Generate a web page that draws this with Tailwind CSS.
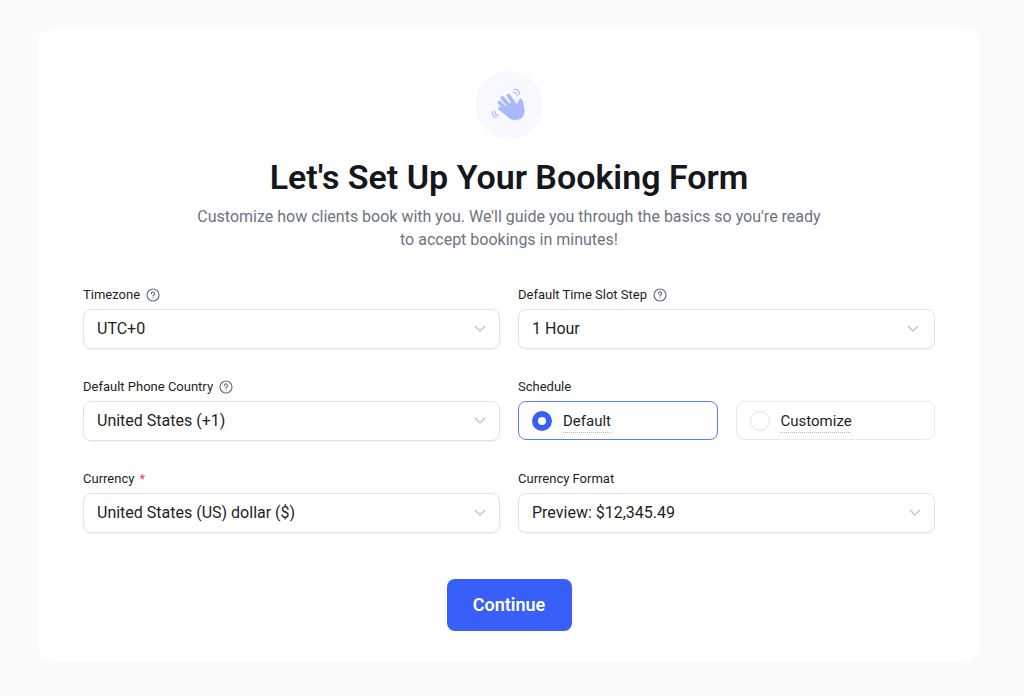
<!DOCTYPE html>
<html lang="en">
<head>
    <meta charset="UTF-8">
    <meta name="viewport" content="width=device-width, initial-scale=1.0">
    <title>Booking Form Setup</title>
    <script src="https://cdn.jsdelivr.net/npm/@tailwindcss/browser@4"></script>
</head>
<body class="bg-[#fafafa] font-[Roboto,sans-serif] text-[#1b1f23]">
    <main class="pt-[27px] pb-8 pl-[38px] pr-[44px]">
        <form class="bg-white rounded-[18px] px-[45px] pt-11 pb-[31px] flex flex-col items-center">
            <div class="size-[68px] rounded-full bg-[#f7f9ff] flex items-center justify-center">
                <!-- Waving hand -->
                <svg class="size-9" viewBox="0 0 36 36" fill="none" stroke="#a9bafb" stroke-linecap="round" stroke-linejoin="round">
                    <path d="M15 21L21 16L28 19C31 22 32 26 29.500 29.500C26.500 33 22 33 18 30Z" fill="#a9bafb" stroke-width="2"/>
                    <path d="M9 21.500L19 29" stroke-width="3.800"/>
                    <path d="M8.500 15.500L18 25" stroke-width="3.800"/>
                    <path d="M11.500 11L21 22" stroke-width="3.800"/>
                    <path d="M17.500 8.500L26 21" stroke-width="3.800"/>
                    <path d="M27 20C26.500 17 28 14.500 29.500 12.500C31.500 13.500 31.500 17 32 20C33.500 25 32 30 28 31.500" fill="#a9bafb" stroke-width="2"/>
                    <path d="M22 5.500C24.500 5 26 7 26 9M23 2.500C26.500 2 29 4.500 28.500 7.500" stroke-width="1.200"/>
                    <path d="M4 24C4 26.500 5 28 7 28.500M1.500 24.500C1 28 3 30 5.500 30.500" stroke-width="1.200"/>
                </svg>
            </div>

            <h1 class="mt-4 text-[34px] leading-11 font-semibold text-[#14181c] text-center">Let's Set Up Your Booking Form</h1>
            <p class="mt-1.5 max-w-[640px] text-base leading-[23px] text-[#6b7480] text-center">Customize how clients book with you. We'll guide you through the basics so you're ready to accept bookings in minutes!</p>

            <div class="mt-8 w-full grid grid-cols-2 gap-x-[18px] gap-y-[26px]">
                <div>
                    <div class="flex items-center gap-1.5 h-6 mb-0.5 text-[13px]">
                        <label for="timezone">Timezone</label>
                        <svg class="size-[14px]" viewBox="0 0 14 14" fill="none" stroke="#6b7280" stroke-width="1.200" stroke-linecap="round"><circle cx="7" cy="7" r="6"/><path d="M5.300 5.700C5.300 3.400 8.700 3.400 8.700 5.600C8.700 6.800 7 6.900 7 8.100M7 9.900V10"/></svg>
                    </div>
                    <div class="grid items-center">
                        <select id="timezone" class="col-start-1 row-start-1 w-full h-10 px-[13px] appearance-none rounded-lg border border-[#e1e4ea] bg-white text-base shadow-xs">
                            <option>UTC+0</option>
                        </select>
                        <svg class="col-start-1 row-start-1 justify-self-end mr-[14px] w-3 h-2 pointer-events-none" viewBox="0 0 12 8" fill="none" stroke="#c3c7ce" stroke-width="1.500"><path d="M1 1L6 6L11 1"/></svg>
                    </div>
                </div>

                <div>
                    <div class="flex items-center gap-1.5 h-6 mb-0.5 text-[13px]">
                        <label for="slot-step">Default Time Slot Step</label>
                        <svg class="size-[14px]" viewBox="0 0 14 14" fill="none" stroke="#6b7280" stroke-width="1.200" stroke-linecap="round"><circle cx="7" cy="7" r="6"/><path d="M5.300 5.700C5.300 3.400 8.700 3.400 8.700 5.600C8.700 6.800 7 6.900 7 8.100M7 9.900V10"/></svg>
                    </div>
                    <div class="grid items-center">
                        <select id="slot-step" class="col-start-1 row-start-1 w-full h-10 px-[13px] appearance-none rounded-lg border border-[#e1e4ea] bg-white text-base shadow-xs">
                            <option>1 Hour</option>
                        </select>
                        <svg class="col-start-1 row-start-1 justify-self-end mr-4 w-3 h-2 pointer-events-none" viewBox="0 0 12 8" fill="none" stroke="#c3c7ce" stroke-width="1.500"><path d="M1 1L6 6L11 1"/></svg>
                    </div>
                </div>

                <div>
                    <div class="flex items-center gap-1.5 h-6 mb-0.5 text-[13px]">
                        <label for="phone-country">Default Phone Country</label>
                        <svg class="size-[14px]" viewBox="0 0 14 14" fill="none" stroke="#6b7280" stroke-width="1.200" stroke-linecap="round"><circle cx="7" cy="7" r="6"/><path d="M5.300 5.700C5.300 3.400 8.700 3.400 8.700 5.600C8.700 6.800 7 6.900 7 8.100M7 9.900V10"/></svg>
                    </div>
                    <div class="grid items-center">
                        <select id="phone-country" class="col-start-1 row-start-1 w-full h-10 px-[13px] appearance-none rounded-lg border border-[#e1e4ea] bg-white text-base shadow-xs">
                            <option>United States (+1)</option>
                        </select>
                        <svg class="col-start-1 row-start-1 justify-self-end mr-[14px] w-3 h-2 pointer-events-none" viewBox="0 0 12 8" fill="none" stroke="#c3c7ce" stroke-width="1.500"><path d="M1 1L6 6L11 1"/></svg>
                    </div>
                </div>

                <fieldset>
                    <legend class="h-6 mb-0.5 text-[13px] leading-6">Schedule</legend>
                    <div class="grid grid-cols-2 gap-[18px]">
                        <label class="flex items-center gap-[11px] h-[39px] px-[13px] rounded-lg border border-[#e8eaed] has-checked:border-[#5b7cf8]">
                            <input type="radio" name="schedule" value="default" checked class="appearance-none size-5 rounded-full border border-[#e1e4ea] bg-white checked:border-[6px] checked:border-[#3860f8]">
                            <span class="text-[15px] leading-5 underline decoration-dotted decoration-[#b4b8bf] decoration-1 underline-offset-[6px]">Default</span>
                        </label>
                        <label class="flex items-center gap-[11px] h-[39px] px-[13px] rounded-lg border border-[#e8eaed] has-checked:border-[#5b7cf8]">
                            <input type="radio" name="schedule" value="customize" class="appearance-none size-5 rounded-full border border-[#e1e4ea] bg-white checked:border-[6px] checked:border-[#3860f8]">
                            <span class="text-[15px] leading-5 underline decoration-dotted decoration-[#b4b8bf] decoration-1 underline-offset-[6px]">Customize</span>
                        </label>
                    </div>
                </fieldset>

                <div>
                    <div class="flex items-center h-6 mb-0.5 text-[13px]">
                        <label for="currency">Currency <span class="ml-0.5 text-[#fb3748]">*</span></label>
                    </div>
                    <div class="grid items-center">
                        <select id="currency" class="col-start-1 row-start-1 w-full h-10 px-[13px] appearance-none rounded-lg border border-[#e1e4ea] bg-white text-base shadow-xs" required>
                            <option>United States (US) dollar ($)</option>
                        </select>
                        <svg class="col-start-1 row-start-1 justify-self-end mr-[14px] w-3 h-2 pointer-events-none" viewBox="0 0 12 8" fill="none" stroke="#c3c7ce" stroke-width="1.500"><path d="M1 1L6 6L11 1"/></svg>
                    </div>
                </div>

                <div>
                    <div class="flex items-center h-6 mb-0.5 text-[13px]">
                        <label for="currency-format">Currency Format</label>
                    </div>
                    <div class="grid items-center">
                        <select id="currency-format" class="col-start-1 row-start-1 w-full h-10 px-[13px] appearance-none rounded-lg border border-[#e1e4ea] bg-white text-base shadow-xs">
                            <option>Preview: $12,345.49</option>
                        </select>
                        <svg class="col-start-1 row-start-1 justify-self-end mr-[14px] w-3 h-2 pointer-events-none" viewBox="0 0 12 8" fill="none" stroke="#c3c7ce" stroke-width="1.500"><path d="M1 1L6 6L11 1"/></svg>
                    </div>
                </div>
            </div>

            <button type="submit" class="mt-[46px] w-[125px] h-13 rounded-lg bg-[#3860f8] text-white text-lg font-semibold">Continue</button>
        </form>
    </main>
</body>
</html>
